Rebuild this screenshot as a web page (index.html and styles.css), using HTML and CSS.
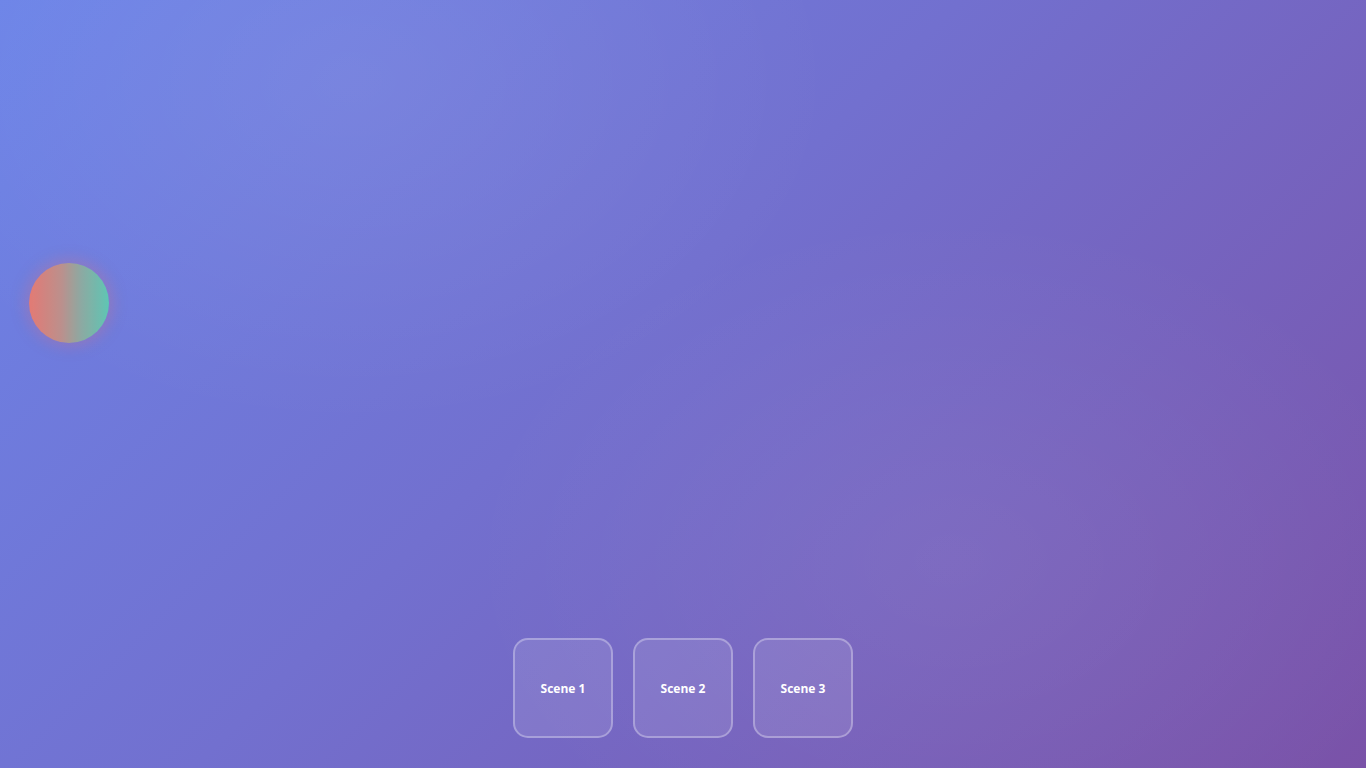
FILE: index.html
```html
<!DOCTYPE html>
<html lang="en">
<head>
    <meta charset="UTF-8">
    <meta name="viewport" content="width=device-width, initial-scale=1.0">
    <title>Scenes</title>
    <link rel="stylesheet" href="styles.css">
</head>
<body>
    <!-- Scene canvas -->
    <div class="stage">
        <div class="orb"></div>
    </div>

    <!-- Scene switcher -->
    <div class="controls">
        <button class="scene-btn">Scene 1</button>
        <button class="scene-btn">Scene 2</button>
        <button class="scene-btn">Scene 3</button>
    </div>
</body>
</html>
```

FILE: styles.css
```css
* {
    margin: 0;
    padding: 0;
    box-sizing: border-box;
}
html, body {
    height: 100%;
}
body {
    font-family: "Open Sans", "Liberation Sans", sans-serif;
    background:
        radial-gradient(ellipse 700px 500px at 350px 80px, rgba(255, 255, 255, 0.07), transparent 70%),
        radial-gradient(ellipse 700px 500px at 950px 560px, rgba(255, 255, 255, 0.06), transparent 70%),
        linear-gradient(135deg, #6c84e8 0%, #7270cf 45%, #7a52a8 100%);
    overflow: hidden;
    display: flex;
    flex-direction: column;
    justify-content: flex-end;
    align-items: center;
    padding-bottom: 30px;
}
.stage {
    position: absolute;
    inset: 0;
}
/* floating object in the scene */
.orb {
    position: absolute;
    left: 29px;
    top: 263px;
    width: 80px;
    height: 80px;
    border-radius: 50%;
    background: linear-gradient(90deg, #ea7a6f 0%, #c19188 40%, #8fac9f 65%, #5ecab2 100%);
    box-shadow: 0 0 16px 3px rgba(240, 110, 110, 0.3);
    opacity: 0.95;
}
.controls {
    position: relative;
    display: flex;
    gap: 20px;
}
.scene-btn {
    width: 100px;
    height: 100px;
    border: 2px solid rgba(255, 255, 255, 0.3);
    border-radius: 15px;
    background: rgba(255, 255, 255, 0.1);
    color: #fff;
    font-family: inherit;
    font-size: 12px;
    font-weight: 700;
    cursor: pointer;
}
.scene-btn:hover {
    background: rgba(255, 255, 255, 0.2);
}
```
